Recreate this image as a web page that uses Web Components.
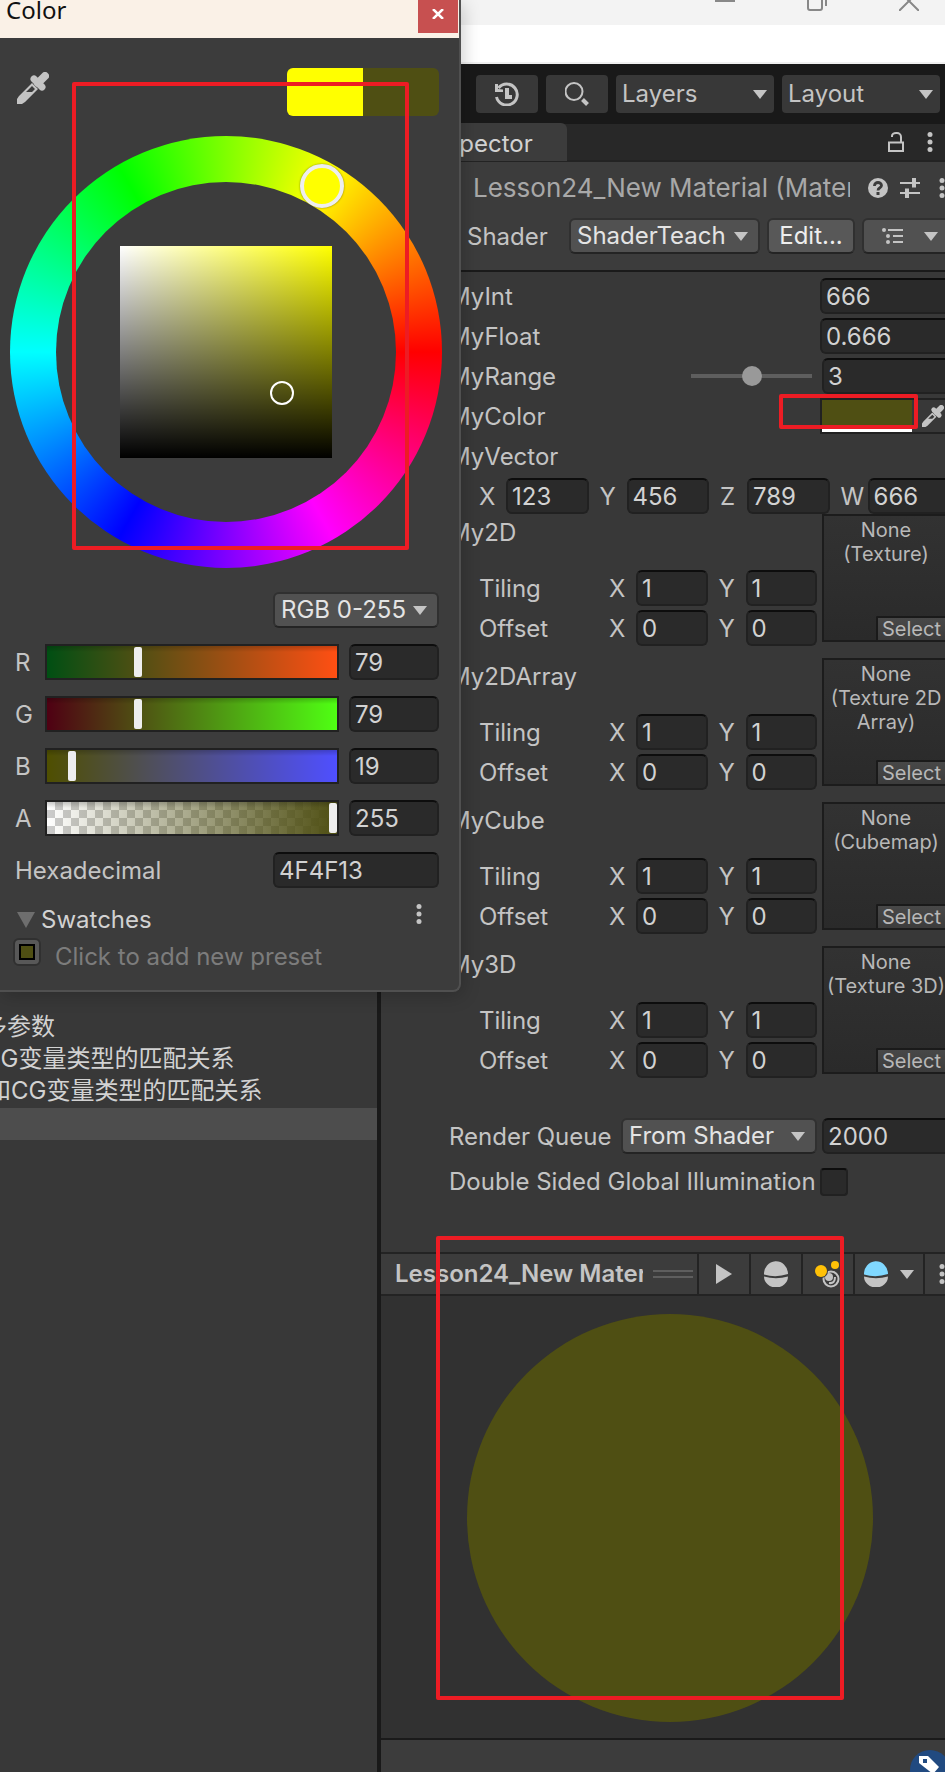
<!DOCTYPE html>
<html lang="en">
<head>
<meta charset="utf-8">
<title>Material Inspector</title>
<style>
  body {
    margin: 0;
    min-height: 100vh;
    overflow-x: hidden;
    background: #383838;
    color: #c4c4c4;
    font: 24px/38px Inter, "Noto Sans CJK SC", sans-serif;
  }
</style>
</head>
<body>
<editor-app></editor-app>

<script>
const define = (name, css, html) => {
  customElements.define(name, class extends HTMLElement {
    constructor() {
      super();
      this.attachShadow({ mode: 'open' });
    }
    connectedCallback() {
      const get = (key, fallback = '') => this.getAttribute(key) ?? fallback;
      const body = typeof html === 'function' ? html(get, this) : html;
      this.shadowRoot.innerHTML = `<style>*{box-sizing:border-box}${css}</style>${body}`;
    }
  });
};

/* Shared look of text boxes */
const INPUT_CSS = `
  input[type=text] {
    width: 100%; min-width: 0; height: 36px; margin: 0; padding: 2px 4px 0;
    border: 2px solid #212121; border-top-color: #0d0d0d; border-radius: 6px;
    background: #2a2a2a; color: #d2d2d2; font: inherit; outline: none;
  }`;

/* ---------- icons ---------- */
const DROPPER = `<path d="M28 4 21 11" stroke="currentColor" stroke-width="8" stroke-linecap="round"/>
  <path d="M17 7 25 15" stroke="currentColor" stroke-width="7" stroke-linecap="round"/>
  <path fill-rule="evenodd" fill="currentColor" d="M15 11 21 17 8 30 5 32H0V27L2 24ZM15 14 18 17 15 20H9Z"/>`;
const ICONS = {
  dropper: ['0 0 32 32', DROPPER],
  arrow: ['0 0 14 9', '<path d="M0 0H14L7 9Z" fill="currentColor"/>'],
  foldout: ['0 0 18 16', '<path d="M0 0H18L9 16Z" fill="currentColor"/>'],
  kebab: ['0 0 6 20', '<g fill="currentColor"><circle cx="3" cy="2.5" r="2.5"/><circle cx="3" cy="10" r="2.5"/><circle cx="3" cy="17.5" r="2.5"/></g>'],
  history: ['0 0 26 24', '<path d="M4.500 6A10.500 10.500 0 1 1 2.500 15" fill="none" stroke="currentColor" stroke-width="3"/><path d="M1 2V10H9V7.500L4 7V2Z" fill="currentColor"/><path d="M13 6V15H18" fill="none" stroke="currentColor" stroke-width="4"/>'],
  search: ['0 0 24 24', '<circle cx="9" cy="9.500" r="8.500" fill="none" stroke="currentColor" stroke-width="2"/><path d="M17.500 17.500 22.500 22.500" stroke="currentColor" stroke-width="4"/>'],
  lock: ['0 0 16 20', '<path d="M1 10.500H15V19H1ZM4 5V4A4 3 0 0 1 8 1H9A4 4 0 0 1 13 5V10" fill="none" stroke="currentColor" stroke-width="2"/>'],
  help: ['0 0 20 20', '<circle cx="10" cy="10" r="10" fill="currentColor"/><path d="M6.500 8V7.500A3.500 3 0 0 1 13.500 7.500C13.500 10 10 9.500 10 12.500" fill="none" stroke="#3c3c3c" stroke-width="2.800"/><rect x="8.500" y="14" width="3" height="3" fill="#3c3c3c"/>'],
  sliders: ['0 0 20 20', '<path d="M0 5H17M17 5H20M0 15H4M3 15H20" stroke="currentColor" stroke-width="2"/><path d="M14 0V9.500M7 10.500V20" stroke="currentColor" stroke-width="4"/>'],
  list: ['0 0 22 16', '<path d="M6 2H21M11 8H21M11 14H21" stroke="currentColor" stroke-width="2"/><g fill="currentColor"><circle cx="2" cy="2" r="2"/><circle cx="6" cy="8" r="2"/><circle cx="6" cy="14" r="2"/></g>'],
  play: ['0 0 16 20', '<path d="M0 0 16 10 0 20Z" fill="currentColor"/>'],
  sphere: ['0 0 24 26', '<path d="M0 14A12 13 0 0 1 24 12.500V13Q12 17 0 13.500Z" fill="var(--top,currentColor)"/><path d="M0 15.500Q12 19 24 15.500A12 11 0 0 1 0 15.500Z" fill="currentColor"/>'],
  light: ['0 0 26 28', '<circle cx="16" cy="19" r="7.500" fill="none" stroke="currentColor" stroke-width="2"/><path d="M14 23Q20 24 20 17" fill="none" stroke="currentColor" stroke-width="2"/><circle cx="14" cy="17" r="4" fill="currentColor"/><circle cx="6" cy="11" r="7" fill="#3c3c3c"/><circle cx="20" cy="5" r="5" fill="#3c3c3c"/><circle cx="6" cy="11" r="6" fill="#ffc107"/><circle cx="20" cy="5" r="4" fill="#ffc107"/>'],
  minimise: ['0 9 20 11', '<path d="M0 10H20" stroke="currentColor" stroke-width="2"/>'],
  restore: ['0 9 20 11', '<path d="M1 5V17Q1 19 3 19H13Q15 19 15 17V5M19 5V15" fill="none" stroke="currentColor" stroke-width="2"/>'],
  close: ['0 9 20 11', '<path d="M0 20 20 0M20 20 0 0" stroke="currentColor" stroke-width="2"/>'],
  cross: ['0 0 12 10', '<path d="M1 0 11 10M11 0 1 10" stroke="currentColor" stroke-width="2.500"/>'],
  tag: ['0 0 40 22', '<circle cx="20" cy="20" r="20" fill="#214a80"/><path d="M9 6H18L29 17 23 24 9 13Z" fill="#fff"/><rect x="13" y="9" width="4" height="4" fill="#214a80"/>'],
};
define('ui-icon', `:host{display:block;flex:none;line-height:0} svg{display:block;overflow:hidden}`, get => {
  const [box, art] = ICONS[get('name')];
  const [, , w, h] = box.split(' ').map(Number);
  const size = Number(get('size', w));
  return `<svg width="${size}" height="${Math.round(size * h / w)}" viewBox="${box}" fill="none" aria-hidden="true">${art}</svg>`;
});

/* ---------- controls ---------- */
define('ui-select', `
  :host{display:block}
  label{display:grid;align-items:center}
  select,ui-icon{grid-area:1/1}
  select{width:100%;height:36px;appearance:none;margin:0;padding:0 6px;border:2px solid #303030;border-bottom-color:#242424;
    border-radius:6px;background:#515151;color:#e4e4e4;font:inherit;line-height:30px;outline:none}
  ui-icon{justify-self:end;margin-right:12px;pointer-events:none;color:#c4c4c4}
  :host([flat]) select{height:38px;border:0;border-radius:4px;background:#383838;color:#c4c4c4;line-height:36px}
  :host([flat]) ui-icon{margin-right:7px}`,
  get => `<label><select aria-label="${get('label')}"><option>${get('value')}</option></select><ui-icon name="arrow"></ui-icon></label>`);

define('ui-button', `
  :host{display:block}
  button{display:flex;align-items:center;justify-content:center;gap:20px;width:100%;height:36px;margin:0;padding:0;
    border:2px solid #303030;border-bottom-color:#242424;border-radius:6px;background:#585858;color:#eee;font:inherit}
  :host([flat]) button{height:38px;border:0;border-radius:4px;background:#383838;color:#c4c4c4}
  :host([bare]) button{height:100%;border:0;border-radius:0;background:none;color:#c4c4c4;gap:12px}
  :host([menu]) button{background:#515151;color:#c4c4c4}`,
  get => `<button type="button" aria-label="${get('label')}"><slot></slot></button>`);

define('number-field', `
  :host{display:grid;grid-template-columns:27px 1fr;height:36px}
  ${INPUT_CSS}`,
  get => `<label for="f">${get('label')}</label><input id="f" type="text" value="${get('value')}">`);

define('property-row', `
  :host{display:grid;grid-template-columns:1fr 130px;height:36px}
  ${INPUT_CSS}`,
  get => `<label for="f">${get('label')}</label><input id="f" type="text" value="${get('value')}">`);

define('range-row', `
  :host{display:grid;grid-template-columns:1fr 121px 128px;column-gap:10px;height:36px}
  ${INPUT_CSS}
  input[type=range]{appearance:none;width:100%;height:36px;margin:0;background:none}
  input[type=range]::-webkit-slider-runnable-track{height:4px;background:#5e5e5e}
  input[type=range]::-webkit-slider-thumb{appearance:none;width:20px;height:20px;margin-top:-8px;border-radius:50%;background:#999}`,
  get => `<label for="r">${get('label')}</label><input id="r" type="range" min="1" max="5" value="3">
    <input type="text" aria-label="${get('label')} value" value="${get('value')}">`);

define('color-row', `
  :host{display:grid;grid-template-columns:1fr 130px;height:36px}
  .well{display:flex;align-items:center;gap:10px;height:36px;border:2px solid #212121;padding:0}
  button{width:90px;height:32px;margin:0;padding:0;border:0;border-bottom:3px solid #fff;background:#4f4f13}`,
  get => `<span>${get('label')}</span><div class="well"><button type="button" aria-label="${get('label')}"></button><ui-icon name="dropper" size="22"></ui-icon></div>`);

define('vector-row', `
  :host{display:block}
  .name{height:36px;margin-bottom:4px}
  .parts{display:grid;grid-template-columns:repeat(4,1fr);gap:11px;padding-left:30px}`,
  get => `<div class="name">${get('label')}</div><div class="parts"><slot></slot></div>`);

define('texture-row', `
  :host{display:grid;grid-template-columns:1fr 208px 128px;column-gap:5px;height:132px}
  .name{height:36px;margin-bottom:20px}
  .sub{padding-left:30px;height:40px}
  .values{display:grid;grid-template-columns:1fr 1fr;gap:4px 11px;align-self:start;padding-top:56px}
  .slot{display:flex;flex-direction:column;justify-content:space-between;height:128px;border:2px solid #1c1c1c;
    background:linear-gradient(#323232,#2a2a2a);font-size:20px;line-height:24px;text-align:center;color:#b8b8b8;padding-top:2px}
  button{align-self:end;width:72px;height:24px;margin:0;padding:0 0 0 4px;border:2px solid #1a1a1a;border-width:2px 0 0 2px;
    border-radius:2px 0 0 0;background:linear-gradient(#484848,#3c3c3c);color:#b8b8b8;font:inherit;line-height:20px;text-align:left}
  span{margin:0 -4px}`,
  get => `<div><div class="name">${get('label')}</div><div class="sub">Tiling</div><div class="sub">Offset</div></div>
    <div class="values">
      <number-field label="X" value="1"></number-field><number-field label="Y" value="1"></number-field>
      <number-field label="X" value="0"></number-field><number-field label="Y" value="0"></number-field>
    </div>
    <div class="slot"><span>None<br>(${get('kind')})</span><button type="button">Select</button></div>`);

define('channel-slider', `
  :host{display:grid;grid-template-columns:30px 1fr 90px;height:36px}
  ${INPUT_CSS}
  input[type=range]{appearance:none;height:36px;margin:0 10px 0 0;padding:0;min-width:0;border:2px solid #212121;
    background:linear-gradient(rgba(0,0,0,.2),transparent 6px),var(--ramp)}
  input[type=range]::-webkit-slider-thumb{appearance:none;width:8px;height:30px;border-radius:2px;background:#eee}`,
  get => `<label for="c">${get('label')}</label>
    <input id="c" type="range" min="0" max="255" value="${get('value')}" style="--ramp:${get('ramp')}">
    <input type="text" aria-label="${get('label')} value" value="${get('value')}">`);

/* ---------- colour window ---------- */
define('hue-wheel', `
  :host{display:block;position:relative;width:432px;aspect-ratio:1}
  .ring{display:grid;place-items:center;width:100%;height:100%;border-radius:50%;
    background:conic-gradient(from 90deg,#f00,#f0f,#00f,#0ff,#0f0,#ff0,#f00)}
  .hole{display:grid;place-items:center;width:340px;height:340px;border-radius:50%;background:#3c3c3c}
  .shade{width:212px;height:212px;background:linear-gradient(transparent,#000),linear-gradient(90deg,#fff,#ff0)}
  .hue,.pick{position:absolute;border-radius:50%}
  .hue{left:290px;top:28px;width:44px;height:44px;border:4px solid #eee;background:#ff0;box-shadow:0 0 2px rgba(0,0,0,.5)}
  .pick{left:260px;top:245px;width:24px;height:24px;border:2px solid #fff}`,
  `<div class="ring"><div class="hole"><div class="shade"></div></div></div><div class="hue"></div><div class="pick"></div>`);

define('color-window', `
  :host{display:block;width:461px;border:solid #505050;border-width:0 2px 2px 0;border-radius:0 0 8px 0;
    background:#3c3c3c;box-shadow:2px 4px 18px rgba(0,0,0,.2);overflow:hidden}
  header{display:flex;justify-content:space-between;height:38px;padding:0 1px 0 6px;background:#faf1e7;color:#111;
    font-family:"Noto Sans",sans-serif;line-height:20px}
  header button{display:grid;place-items:center;width:40px;height:33px;margin:0;padding:0 0 6px;border:0;background:#c75050;color:#fff}
  .top,.mode,.channels,.hex,.swatches,.preset{padding:0 20px 0 15px}
  .top{display:flex;justify-content:space-between;align-items:flex-start;padding-top:30px}
  .top ui-icon{padding:4px 2px}
  .pair{display:flex;width:152px;height:48px;border-radius:6px;background:linear-gradient(90deg,#ff0 50%,#4f4f13 50%)}
  hue-wheel{margin:20px 17px 24px 10px}
  .mode{display:flex;justify-content:flex-end}
  .mode ui-select{width:166px}
  .channels{display:grid;gap:16px;margin:16px 0}
  .hex{display:grid;grid-template-columns:1fr 166px;height:36px}
  .swatches{display:flex;align-items:center;height:32px;margin-top:16px;color:#d2d2d2}
  .swatches ui-icon[name=foldout]{margin:0 6px 0 2px;color:#6e6e6e}
  .swatches ui-button{width:40px;height:32px;margin:-12px 0 0 auto}
  .preset{display:flex;gap:14px;height:54px;padding-left:13px;padding-top:2px;color:#7c7c7c}
  .preset button{width:28px;height:28px;margin:0;padding:0;border:2px solid #303030;border-radius:6px;background:#585858;display:grid;place-items:center}
  .preset i{width:16px;height:16px;border:2px solid #000;background:#4f4f13}
  ${INPUT_CSS}`,
  `<header>Color<button type="button" aria-label="Close"><ui-icon name="cross"></ui-icon></button></header>
   <div class="top"><ui-icon name="dropper"></ui-icon><div class="pair"></div></div>
   <hue-wheel></hue-wheel>
   <div class="mode"><ui-select label="Colour mode" value="RGB 0-255"></ui-select></div>
   <div class="channels">
     <channel-slider label="R" value="79" ramp="linear-gradient(90deg,#004f13,#ff4f13)"></channel-slider>
     <channel-slider label="G" value="79" ramp="linear-gradient(90deg,#4f0013,#4fff13)"></channel-slider>
     <channel-slider label="B" value="19" ramp="linear-gradient(90deg,#4f4f00,#4f4fff)"></channel-slider>
     <channel-slider label="A" value="255" ramp="linear-gradient(90deg,rgba(79,79,19,0),#4f4f13),repeating-conic-gradient(#ccc 0 25%,#fff 0 50%) 0 0/16px 16px"></channel-slider>
   </div>
   <div class="hex"><label for="hex">Hexadecimal</label><input id="hex" type="text" value="4F4F13"></div>
   <div class="swatches"><ui-icon name="foldout"></ui-icon>Swatches<ui-button bare label="Swatch menu"><ui-icon name="kebab"></ui-icon></ui-button></div>
   <div class="preset"><button type="button" aria-label="Add preset"><i></i></button><span>Click to add new preset</span></div>`);

/* ---------- inspector ---------- */
define('inspector-panel', `
  :host{display:flex;flex-direction:column;min-width:0;background:#383838}
  .tabs{display:flex;align-items:center;height:38px;padding-right:25px;background:#282828;border-bottom:2px solid #232323}
  .tab{height:38px;padding:0 34px 0 45px;margin-right:auto;border-radius:0 6px 0 0;background:#3c3c3c;color:#d2d2d2;line-height:42px}
  .tabs ui-icon{margin-left:23px}
  .tabs ui-icon[name=lock]{margin-left:0}
  .head{padding-bottom:16px;background:#3c3c3c;border-bottom:2px solid #1a1a1a}
  .title{display:flex;align-items:center;gap:12px;height:52px;margin-bottom:4px;padding:0 6px 0 92px}
  .title strong{flex:1;min-width:0;margin-right:6px;overflow:hidden;white-space:nowrap;font-size:26px;font-weight:400;color:#a8a8a8}
  .title ui-icon[name=kebab]{width:20px;padding-left:7px}
  .shader{display:grid;grid-template-columns:1fr 191px 88px 96px;gap:7px;height:36px;padding-left:86px}
  .body{display:grid;gap:4px;padding:6px 8px 0 68px}
  .textures{display:grid;gap:12px;margin-top:-4px}
  .queue{display:grid;grid-template-columns:1fr 196px 128px;column-gap:5px;height:36px;margin-top:36px}
  .gi{display:grid;grid-template-columns:1fr 130px;grid-template-rows:28px;align-items:center;margin:10px 0 56px}
  .gi label{line-height:28px}
  input[type=checkbox]{appearance:none;width:28px;height:28px;margin:0;border:2px solid #212121;border-top-color:#0d0d0d;border-radius:4px;background:#2a2a2a}
  ${INPUT_CSS}`,
  `<div class="tabs"><div class="tab">Inspector</div><ui-icon name="lock"></ui-icon><ui-icon name="kebab"></ui-icon></div>
   <div class="head">
     <div class="title"><strong>Lesson24_New Material (Material)</strong><ui-icon name="help"></ui-icon><ui-icon name="sliders"></ui-icon><ui-icon name="kebab"></ui-icon></div>
     <div class="shader"><span>Shader</span><ui-select label="Shader" value="ShaderTeach"></ui-select><ui-button label="Edit">Edit...</ui-button>
       <ui-button menu label="Presets"><ui-icon name="list"></ui-icon><ui-icon name="arrow"></ui-icon></ui-button></div>
   </div>
   <div class="body">
     <property-row label="MyInt" value="666"></property-row>
     <property-row label="MyFloat" value="0.666"></property-row>
     <range-row label="MyRange" value="3"></range-row>
     <color-row label="MyColor"></color-row>
     <vector-row label="MyVector">
       <number-field label="X" value="123"></number-field><number-field label="Y" value="456"></number-field>
       <number-field label="Z" value="789"></number-field><number-field label="W" value="666"></number-field>
     </vector-row>
     <div class="textures">
       <texture-row label="My2D" kind="Texture"></texture-row>
       <texture-row label="My2DArray" kind="Texture 2D Array"></texture-row>
       <texture-row label="MyCube" kind="Cubemap"></texture-row>
       <texture-row label="My3D" kind="Texture 3D"></texture-row>
     </div>
     <div class="queue"><label for="q">Render Queue</label><ui-select label="Queue source" value="From Shader"></ui-select><input id="q" type="text" value="2000"></div>
     <div class="gi"><label for="gi">Double Sided Global Illumination</label><input id="gi" type="checkbox"></div>
   </div>
   <material-preview></material-preview>`);

define('material-preview', `
  :host{display:flex;flex-direction:column;flex:1}
  .bar{display:grid;grid-template-columns:1fr 52px 52px 52px 70px 35px;height:44px;background:#3c3c3c;border:solid #232323;border-width:2px 0}
  .bar ui-button{border-left:2px solid #232323}
  .name{display:grid;grid-template-columns:1fr 40px;gap:10px;align-items:center;height:40px;padding:0 4px 0 14px}
  .name b{overflow:hidden;white-space:nowrap;font-weight:600;line-height:42px}
  .grip{height:8px;border:solid #5e5e5e;border-width:2px 0}
  .stage{display:grid;place-items:center;flex:1;padding:18px 0 16px;background:#313131}
  .ball{width:406px;height:408px;border-radius:50%;background:#4f4f13}
  footer{display:flex;justify-content:flex-end;height:34px;padding:10px 8px 0;border-top:2px solid #1a1a1a;background:#3c3c3c;overflow:hidden}
  .sky{--top:#80d8ff}`,
  `<div class="bar">
     <div class="name"><b>Lesson24_New Material</b><div class="grip"></div></div>
     <ui-button bare label="Play"><ui-icon name="play"></ui-icon></ui-button>
     <ui-button bare label="Shape"><ui-icon name="sphere"></ui-icon></ui-button>
     <ui-button bare label="Lighting"><ui-icon name="light"></ui-icon></ui-button>
     <ui-button bare label="Sky"><ui-icon class="sky" name="sphere"></ui-icon><ui-icon name="arrow"></ui-icon></ui-button>
     <ui-button bare label="More"><ui-icon name="kebab"></ui-icon></ui-button>
   </div>
   <div class="stage"><div class="ball"></div></div>
   <footer><ui-icon name="tag"></ui-icon></footer>`);

/* ---------- editor frame ---------- */
define('scene-list', `
  :host{display:block;padding-top:888px;border-right:4px solid #191919;background:#383838;overflow:hidden}
  ul{margin:0;padding:0;list-style:none;color:#d2d2d2;line-height:30px;white-space:nowrap}
  li{height:32px;text-indent:-17px}
  .mixed{text-indent:-13px}
  .current{background:#4d4d4d}`,
  `<ul><li>多参数</li><li>CG变量类型的匹配关系</li><li class="mixed">和CG变量类型的匹配关系</li><li class="current"></li></ul>`);

define('editor-app', `
  :host{display:block;position:relative;overflow:hidden}
  .frame{display:flex;flex-direction:column;min-height:100vh;margin-right:-13px}
  .caption{display:flex;justify-content:flex-end;height:25px;padding-right:3px;background:#f3f3f3}
  .caption button{display:flex;justify-content:center;width:92px;height:25px;margin:0;padding:0;border:0;background:none;color:#888}
  .menu{height:39px;background:#fff;border-bottom:2px solid #f0f0f0}
  .tools{display:grid;grid-template-columns:62px 62px 158px 158px;justify-content:end;gap:8px;height:60px;padding:11px 18px;background:#191919}
  .work{display:grid;grid-template-columns:381px 1fr;flex:1}
  color-window{position:absolute;left:0;top:0}
  .mark{position:absolute;border:4px solid #ed1c24;border-radius:2px;pointer-events:none}
  .wheel{left:72px;top:82px;width:337px;height:468px}
  .swatch{left:779px;top:394px;width:139px;height:35px}
  .ball{left:436px;top:1236px;width:408px;height:464px}`,
  `<div class="frame">
     <div class="caption"><button type="button" aria-label="Minimise"><ui-icon name="minimise"></ui-icon></button>
       <button type="button" aria-label="Restore"><ui-icon name="restore"></ui-icon></button>
       <button type="button" aria-label="Close"><ui-icon name="close"></ui-icon></button></div>
     <div class="menu"></div>
     <div class="tools">
       <ui-button flat label="History"><ui-icon name="history"></ui-icon></ui-button>
       <ui-button flat label="Search"><ui-icon name="search"></ui-icon></ui-button>
       <ui-select flat label="Layers" value="Layers"></ui-select>
       <ui-select flat label="Layout" value="Layout"></ui-select>
     </div>
     <div class="work"><scene-list></scene-list><inspector-panel></inspector-panel></div>
   </div>
   <color-window></color-window>
   <div class="mark wheel"></div><div class="mark swatch"></div><div class="mark ball"></div>`);
</script>
</body>
</html>
